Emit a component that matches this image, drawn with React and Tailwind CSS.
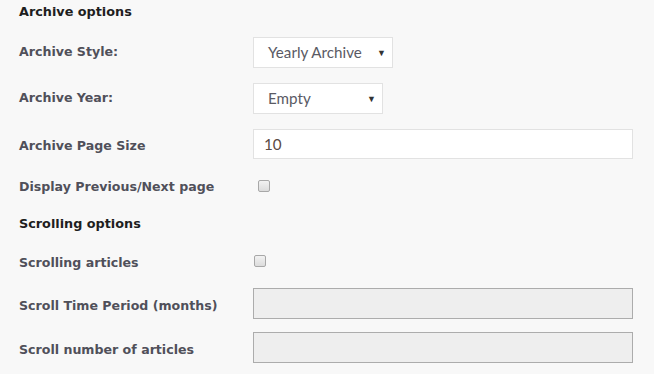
export default function App() {
  const label = "w-[234px] shrink-0 text-[12.6px] font-bold text-[#50505a] font-['DejaVu_Sans',sans-serif]";
  const heading = "h-[24px] flex items-center text-[12.8px] font-bold text-[#1e1e1e] font-['DejaVu_Sans',sans-serif]";

  return (
    <div className="w-[654px] h-[374px] bg-[#f8f8f8] pl-[19px] overflow-hidden font-['Lato',sans-serif]">
      {/* Archive options */}
      <div className={heading}>Archive options</div>

      <div className="mt-[13px] h-[31px] flex items-center">
        <div className={label}>Archive Style:</div>
        <div className="w-[140px] h-[31px] bg-white border border-[#e2e2e2] flex items-center justify-between pl-[14px] pr-[6px] text-[15.2px] text-[#5a5a64]">
          <span>Yearly Archive</span>
          <span className="text-[9px] text-[#333]">▼</span>
        </div>
      </div>

      <div className="mt-[15px] h-[31px] flex items-center">
        <div className={label}>Archive Year:</div>
        <div className="w-[130px] h-[31px] bg-white border border-[#e2e2e2] flex items-center justify-between pl-[14px] pr-[6px] text-[15.2px] text-[#5a5a64]">
          <span>Empty</span>
          <span className="text-[9px] text-[#333]">▼</span>
        </div>
      </div>

      <div className="mt-[15px] h-[30px] flex items-center">
        <div className={`${label} pt-[5px]`}>Archive Page Size</div>
        <div className="w-[380px] h-[30px] bg-white border border-[#e2e2e2] flex items-center pl-[10px] text-[15.2px] text-[#5a4a44]">
          10
        </div>
      </div>

      <div className="mt-[17px] h-[20px] flex items-center">
        <div className={`${label} pt-[3px]`}>Display Previous/Next page</div>
        <div className="ml-[5px] w-[12px] h-[12px] rounded-[2px] border border-[#a8a8a8] bg-gradient-to-b from-[#f2f2f2] to-[#dcdcdc]" />
      </div>

      {/* Scrolling options */}
      <div className={`mt-[16px] ${heading}`}>Scrolling options</div>

      <div className="mt-[15px] h-[20px] flex items-center">
        <div className={`${label} pt-[4px]`}>Scrolling articles</div>
        <div className="ml-[1px] w-[12px] h-[12px] rounded-[2px] border border-[#a8a8a8] bg-gradient-to-b from-[#f2f2f2] to-[#dcdcdc]" />
      </div>

      <div className="mt-[17px] h-[31px] flex items-center">
        <div className={`${label} pt-[5px]`}>Scroll Time Period (months)</div>
        <div className="w-[380px] h-[31px] bg-[#eeeeee] border border-[#acacac]" />
      </div>

      <div className="mt-[13px] h-[31px] flex items-center">
        <div className={`${label} pt-[5px]`}>Scroll number of articles</div>
        <div className="w-[380px] h-[31px] bg-[#eeeeee] border border-[#acacac]" />
      </div>
    </div>
  );
}
